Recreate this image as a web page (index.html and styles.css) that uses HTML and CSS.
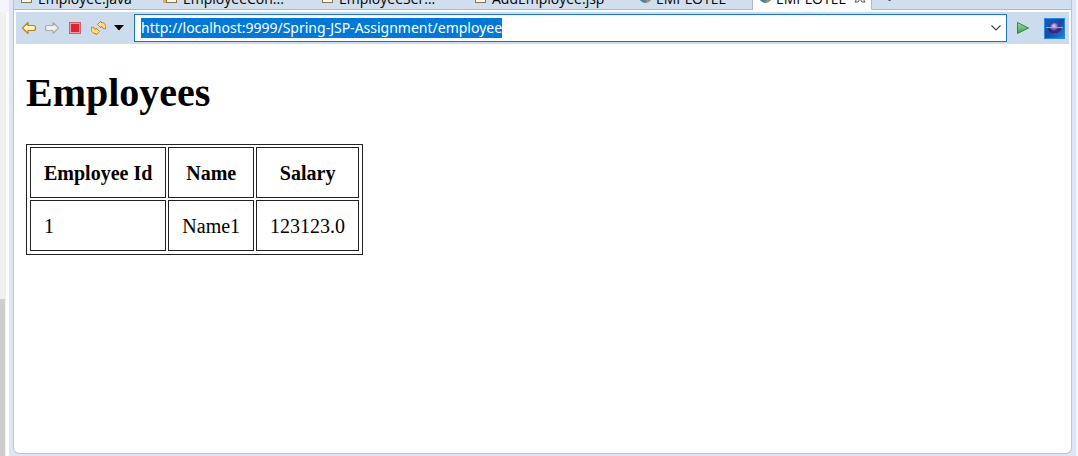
FILE: index.html
```html
<!DOCTYPE html>
<html lang="en">
<head>
<meta charset="utf-8">
<title>EMPLOYEE</title>
<link rel="stylesheet" href="styles.css">
</head>
<body>
<div class="workbench">
  <div class="side-scroll"><div class="side-thumb"></div></div>
  <section class="editor">
    <nav class="tabs">
      <button class="tab tab-java"><span class="file-icon"></span><span class="tab-label">Employee.java</span></button>
      <button class="tab tab-con"><span class="file-icon file-warn"></span><span class="tab-label">EmployeeCon...</span></button>
      <button class="tab tab-serv"><span class="file-icon"></span><span class="tab-label">EmployeeSer...</span></button>
      <button class="tab tab-jsp"><span class="file-icon"></span><span class="tab-label">AddEmployee.jsp</span></button>
      <button class="tab tab-web"><span class="globe"></span><span class="tab-label">EMPLOYEE</span></button>
      <button class="tab tab-web tab-active"><span class="globe"></span><span class="tab-label">EMPLOYEE</span><svg class="close" width="12" height="12" viewBox="0 0 12 12"><path d="M1 1h3l2 3 2-3h3L8 6l3 5H8L6 8l-2 3H1l3-5z" fill="#fff" stroke="#555"/></svg></button>
      <span class="tab-rest"><svg width="7" height="10" viewBox="0 0 7 10"><path d="M3.500 0v9M1 6.500l2.500 2.500L6 6.500" fill="none" stroke="#446"/></svg></span>
    </nav>
    <div class="toolbar">
      <button class="tool" aria-label="Back"><svg width="16" height="16" viewBox="0 0 16 16"><path d="M1.500 8L7 2.500v3h5.500q2 0 2 2v1q0 2-2 2H7v3z" fill="#fff3bd" stroke="#b8801c" stroke-width="1.200" stroke-linejoin="round"/></svg></button>
      <button class="tool" aria-label="Forward"><svg width="16" height="16" viewBox="0 0 16 16"><path d="M14.500 8L9 2.500v3H3.500q-2 0-2 2v1q0 2 2 2H9v3z" fill="#eef0f0" stroke="#aaa9a8" stroke-width="1.200" stroke-linejoin="round"/></svg></button>
      <button class="tool" aria-label="Stop"><svg width="16" height="16" viewBox="0 0 16 16"><rect x="2.500" y="2.500" width="11" height="11" fill="#ef9aa2" stroke="#c9646b"/><rect x="4" y="4" width="8" height="8" fill="#dc2636"/></svg></button>
      <button class="tool" aria-label="Refresh"><svg width="16" height="16" viewBox="0 0 16 16"><g fill="#ffdf85" stroke="#c48a30" stroke-linejoin="round"><path d="M7.500 4.500L11 1v1.500q4.500 0 4.500 4V9L13 8.500Q13 6.500 11 6.500V8z"/><path d="M9.500 11.500L6 15v-1.500q-4.500 0-4.500-4V7L4 7.500Q4 9.500 6 9.500V8z"/></g></svg></button>
      <button class="tool tool-menu" aria-label="History"><svg width="10" height="6" viewBox="0 0 10 6"><path d="M0 0h10L5 5.500z" fill="#000"/></svg></button>
      <div class="address">
        <input class="url" id="url" type="text" aria-label="Address" spellcheck="false" value="http://localhost:9999/Spring-JSP-Assignment/employee">
        <button class="drop" aria-label="Show addresses"><svg width="10" height="6" viewBox="0 0 10 6"><path d="M.5.5L5 5 9.500.5" fill="none" stroke="#444" stroke-width="1.200"/></svg></button>
      </div>
      <button class="go" aria-label="Go"><svg width="14" height="14" viewBox="0 0 14 14"><defs><linearGradient id="g" x2="0" y2="1"><stop stop-color="#a4dba0"/><stop offset="1" stop-color="#36a34c"/></linearGradient></defs><path d="M1.500 1.500L12.500 7l-11 5.500z" fill="url(#g)" stroke="#31864a" stroke-linejoin="round"/></svg></button>
      <svg class="brand" width="21" height="21" viewBox="0 0 21 21"><defs><linearGradient id="b" x2="1" y2="1"><stop stop-color="#1a5cb8"/><stop offset=".5" stop-color="#1f4aa3"/><stop offset="1" stop-color="#2a80dc"/></linearGradient><radialGradient id="p" cx=".4" cy=".3"><stop stop-color="#e6dcf6"/><stop offset=".5" stop-color="#8a80c6"/><stop offset="1" stop-color="#3b2a78"/></radialGradient></defs><rect x=".5" y=".5" width="20" height="20" fill="url(#b)" stroke="#238be3"/><ellipse cx="10.500" cy="11" rx="6.500" ry="4" fill="#1b2c74"/><circle cx="11" cy="10" r="5" fill="url(#p)"/><path d="M2 9.500h17" stroke="#a99be0"/></svg>
    </div>
    <main class="page">
      <h1 class="title">Employees</h1>
      <table class="grid">
        <thead><tr><th>Employee Id</th><th>Name</th><th>Salary</th></tr></thead>
        <tbody><tr><td>1</td><td>Name1</td><td>123123.0</td></tr></tbody>
      </table>
    </main>
  </section>
  <div class="right-edge"></div>
</div>
<script src="address.js"></script>
</body>
</html>
```
FILE: address.js
```js
const url = document.getElementById("url");
url.focus();
url.select();
url.scrollLeft = 0;
```
FILE: styles.css
```css
* { box-sizing: border-box; }
body { margin: 0; font-family: "Open Sans", "Noto Sans", sans-serif; }
button { border: 0; padding: 0; background: none; font: inherit; color: #000; }
svg { display: block; flex: none; }
.workbench {
  display: flex;
  height: 100vh;
  padding-bottom: 2px;
  background: #dfe5f5;
  overflow: hidden;
}
.side-scroll {
  flex: none;
  width: 9px;
  margin-bottom: -2px;
  padding-top: 299px;
  background: linear-gradient(#f5f6fd 12px, transparent 12px), linear-gradient(90deg, #f0f0f0 6px, #fff 6px);
}
.side-thumb { width: 5px; height: 100%; background: #cdcdcd; }
.right-edge { flex: none; width: 2px; margin: 0 0 -2px 4px; background: #f3f5fc; }
.editor {
  flex: 1;
  min-width: 0;
  display: flex;
  flex-direction: column;
  margin-left: 4px;
  background: #fff;
  border: 1px solid #c3c3cf;
  border-top: 0;
  border-radius: 0 0 6px 6px;
}
.tabs { display: flex; height: 10px; overflow: hidden; font-size: 14px; line-height: 20px; }
.tab, .tab-rest {
  display: flex;
  flex: none;
  align-items: flex-end;
  height: 10px;
  background: #d0deed;
  border-bottom: 1px solid #b5b5c8;
}
.tab { padding-left: 7px; gap: 6px; white-space: nowrap; }
.tab-java { width: 142px; }
.tab-con { width: 159px; }
.tab-serv { width: 153px; }
.tab-jsp { width: 165px; }
.tab-web { width: 120px; padding-left: 6px; gap: 4px; border-right: 1px solid #b5b5c8; }
.tab-active { width: 119px; background: #fff; border-bottom-color: #fff; }
.tab-rest { flex: 1; padding-left: 14px; align-items: flex-start; }
.tab-rest svg { margin-top: -8px; }
.file-icon {
  width: 11px;
  height: 14px;
  margin-bottom: 6px;
  background: #f8f7ee;
  border: 1px solid #85764a;
}
.file-warn { margin-left: 3px; box-shadow: -3px 0 0 #e2ae43; }
.globe {
  width: 13px;
  height: 13px;
  margin-bottom: 6px;
  border-radius: 50%;
  background: linear-gradient(90deg, #377ba5, #52849a 50%, #a59a60 60%, #6c7e9c);
}
.close { margin: 0 0 6px 4px; }
.toolbar {
  display: flex;
  align-items: center;
  height: 32px;
  margin: 2px 2px 0;
  padding-left: 5px;
  background: #cddcec;
}
.tool { width: 16px; height: 16px; margin-right: 7px; display: flex; align-items: center; justify-content: center; }
.tool-menu { width: 12px; margin-right: 9px; }
.address { flex: 1; min-width: 0; height: 28px; display: flex; background: #fff; border: 1px solid #1f75bd; }
.url {
  flex: 1;
  min-width: 0;
  border: 0;
  outline: 0;
  padding: 0 0 0 6px;
  background: transparent;
  font: 14px/20px "Noto Sans", "Open Sans", sans-serif;
  color: #000;
}
.url::selection { background: #0078d7; color: #fff; }
.drop { width: 20px; display: flex; align-items: center; justify-content: center; }
.go { margin: 0 14px 0 9px; }
.brand { margin-right: 4px; }
.page { padding: 26px 12px; font-family: "Liberation Serif", "Times New Roman", serif; font-size: 20px; color: #000; }
.title { margin: 0 0 28px; font-size: 40px; line-height: 46px; }
.grid { border: 1px solid #222; border-spacing: 2px; padding: 0 1px 1px; line-height: 23px; }
.grid th, .grid td { border: 1px solid #222; padding: 14px 13px 12px; }
```
